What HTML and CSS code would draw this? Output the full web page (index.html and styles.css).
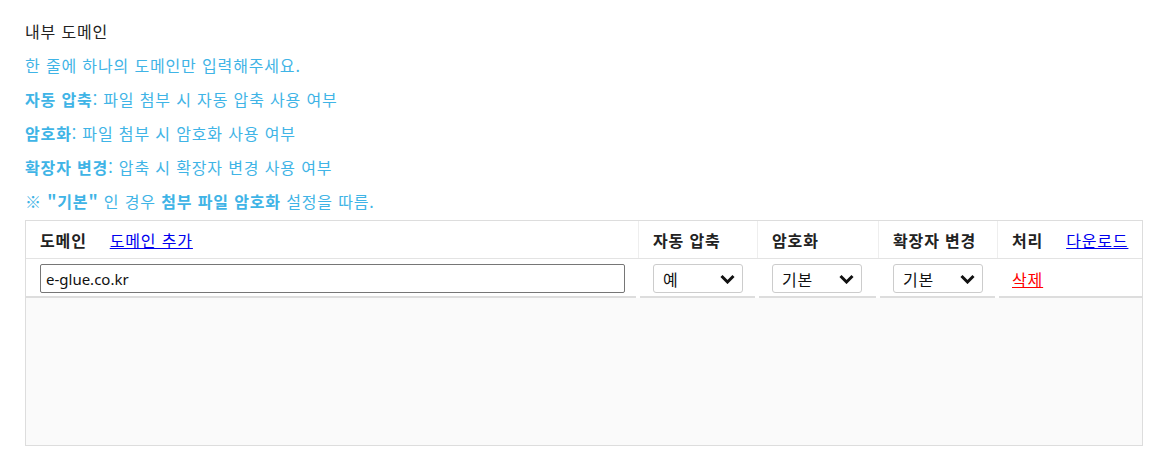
FILE: index.html
```html
<!DOCTYPE html>
<html lang="ko">
<head>
  <meta charset="UTF-8">
  <title>내부 도메인</title>
  <link rel="stylesheet" href="styles.css">
</head>
<body>
  <section class="domain-setting">
    <div class="title">내부 도메인</div>
    <div class="help">한 줄에 하나의 도메인만 입력해주세요.</div>
    <div class="help"><b>자동 압축</b>: 파일 첨부 시 자동 압축 사용 여부</div>
    <div class="help"><b>암호화</b>: 파일 첨부 시 암호화 사용 여부</div>
    <div class="help"><b>확장자 변경</b>: 압축 시 확장자 변경 사용 여부</div>
    <div class="help">※ <b>"기본"</b> 인 경우 <b>첨부 파일 암호화</b> 설정을 따름.</div>

    <div class="domain-table">
      <div class="row head">
        <div class="cell"><b>도메인</b> <a href="#" class="link">도메인 추가</a></div>
        <div class="cell"><b>자동 압축</b></div>
        <div class="cell"><b>암호화</b></div>
        <div class="cell"><b>확장자 변경</b></div>
        <div class="cell"><b>처리</b> <a href="#" class="link">다운로드</a></div>
      </div>
      <div class="body">
        <div class="row item">
          <div class="cell"><input type="text" class="domain-input" value="e-glue.co.kr"></div>
          <div class="cell">
            <span class="select-wrap">
              <select><option>예</option><option>아니오</option><option>기본</option></select>
              <svg class="chev" viewBox="0 0 16 10"><path d="M2 2l6 6 6-6" fill="none" stroke="#111" stroke-width="3"/></svg>
            </span>
          </div>
          <div class="cell">
            <span class="select-wrap">
              <select><option>기본</option><option>예</option><option>아니오</option></select>
              <svg class="chev" viewBox="0 0 16 10"><path d="M2 2l6 6 6-6" fill="none" stroke="#111" stroke-width="3"/></svg>
            </span>
          </div>
          <div class="cell">
            <span class="select-wrap">
              <select><option>기본</option><option>예</option><option>아니오</option></select>
              <svg class="chev" viewBox="0 0 16 10"><path d="M2 2l6 6 6-6" fill="none" stroke="#111" stroke-width="3"/></svg>
            </span>
          </div>
          <div class="cell"><a href="#" class="del">삭제</a></div>
        </div>
      </div>
    </div>
  </section>
</body>
</html>
```

FILE: styles.css
```css
* {
  box-sizing: border-box;
  margin: 0;
  padding: 0;
}

body {
  background-color: #ffffff;
  color: #222;
  font-family: "Noto Sans CJK KR", "Noto Sans", sans-serif;
  font-size: 16px;
  letter-spacing: 0.85px;
}

.domain-setting {
  padding: 14px 26px 0 25px;
}

.title,
.help {
  height: 34px;
  line-height: 34px;
  white-space: nowrap;
}

.help {
  color: #3fb4e6;
}

.domain-table {
  width: 1118px;
  margin-top: 2px;
  border: 1px solid #ddd;
}

.row {
  display: grid;
  grid-template-columns: 612px 119px 121px 119px 145px;
}

.head {
  height: 38px;
  border-bottom: 1px solid #e3e3e3;
}

.head .cell {
  display: flex;
  align-items: center;
  padding: 0 14px;
  color: #222;
  white-space: nowrap;
}

.head .cell + .cell {
  border-left: 1px solid #eee;
  padding-left: 14px;
}

.head .link {
  margin-left: 23px;
}

.link {
  color: #0000ee;
}

.body {
  height: 186px;
  background-color: #fafafa;
}

.item {
  background-color: #ffffff;
}

.item .cell {
  height: 39px;
  display: flex;
  align-items: center;
  padding: 2px 8px 0 13px;
  border-bottom: 2px solid #ddd;
  margin: 0 2px;
}

.item .cell:first-child {
  margin-left: 0;
  padding: 2px 11px 0 14px;
}

.item .cell:last-child {
  margin-right: 0;
}

.domain-input {
  width: 100%;
  height: 29px;
  border: 1px solid #767676;
  border-radius: 2px;
  padding: 0 5px;
  font-family: "Noto Sans", "Noto Sans CJK KR", sans-serif;
  font-size: 15px;
  letter-spacing: 0;
  color: #111;
}

.select-wrap {
  position: relative;
  display: inline-block;
}

.select-wrap select {
  appearance: none;
  -webkit-appearance: none;
  width: 90px;
  height: 29px;
  border: 1px solid #ccc;
  border-radius: 3px;
  background-color: #fff;
  padding: 0 9px;
  font-family: "Noto Sans CJK KR", sans-serif;
  font-size: 16px;
  letter-spacing: 0.85px;
  color: #111;
}

.chev {
  position: absolute;
  right: 7px;
  top: 10px;
  width: 17px;
  height: 10px;
  pointer-events: none;
}

.del {
  color: #ff0000;
}
```
